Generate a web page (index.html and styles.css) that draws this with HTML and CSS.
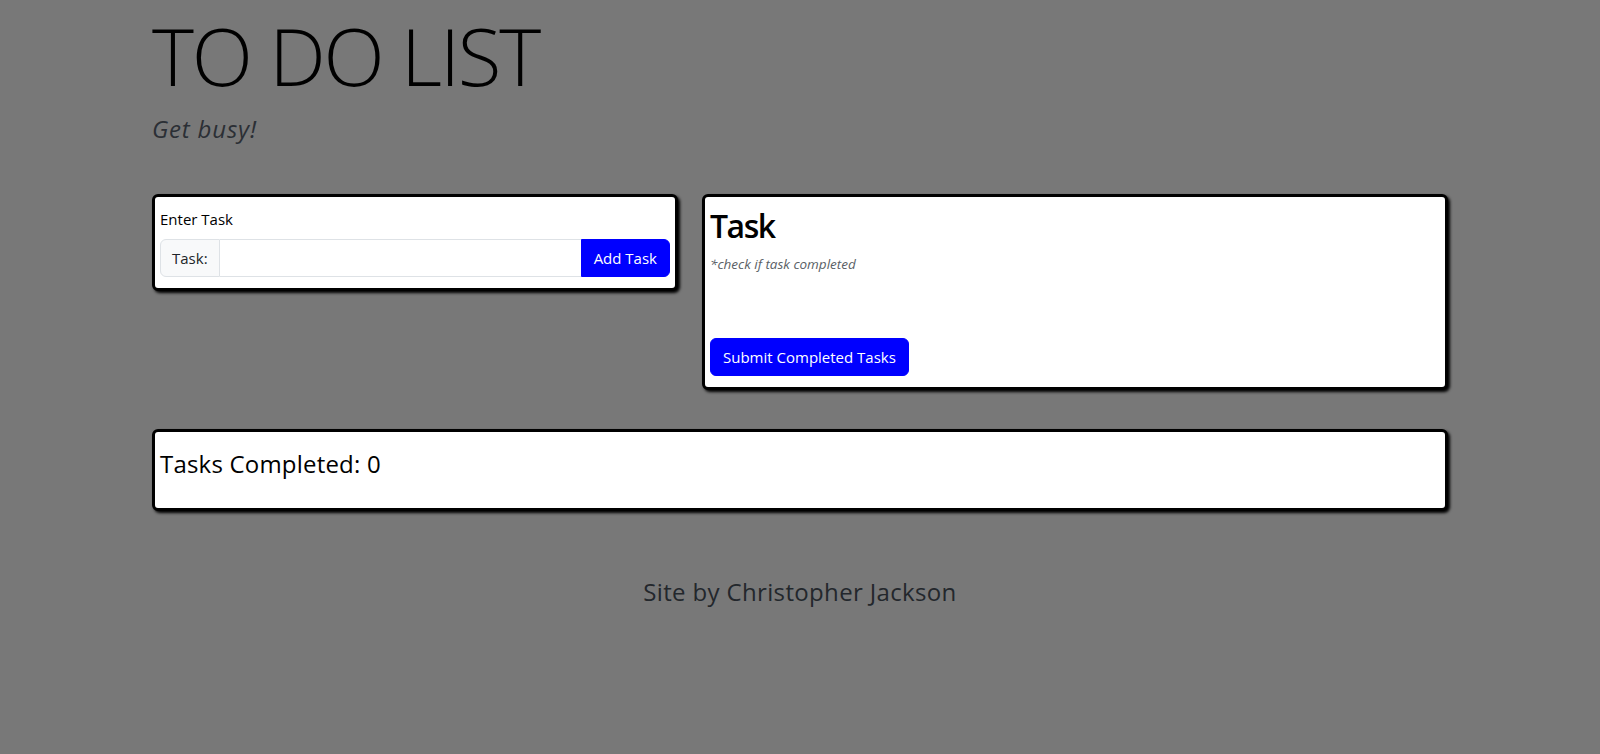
FILE: index.html
```html
<!DOCTYPE html>
<html lang="en">
<head>
<meta charset="utf-8">
<title>To Do List</title>
<link rel="stylesheet" href="styles.css">
</head>
<body>
<div class="container">
  <header class="hero">
    <h1 class="title">TO DO LIST</h1>
    <p class="lead">Get busy!</p>
  </header>
  <div class="row">
    <div class="col-left">
      <div class="box entry-box">
        <label class="form-label" for="task">Enter Task</label>
        <div class="input-group">
          <span class="addon">Task:</span>
          <input id="task" class="field" type="text">
          <button class="btn btn-add" type="button">Add Task</button>
        </div>
      </div>
    </div>
    <div class="col-right">
      <div class="box task-box">
        <h2 class="task-title">Task</h2>
        <p class="note">*check if task completed</p>
        <div class="task-list"></div>
        <button class="btn btn-submit" type="button">Submit Completed Tasks</button>
      </div>
    </div>
  </div>
  <div class="box done-box">
    <h4 class="done-title">Tasks Completed: 0</h4>
  </div>
  <footer class="footer">Site by Christopher Jackson</footer>
</div>
</body>
</html>
```
FILE: styles.css
```css
* { box-sizing: border-box; }

html, body {
  margin: 0;
  padding: 0;
}

body {
  background: #787878;
  color: #212529;
  font-family: "Open Sans", "Noto Sans", "Liberation Sans", sans-serif;
  font-size: 16px;
  line-height: 1.5;
  min-height: 754px;
}

.container {
  width: 1320px;
  margin: 0 auto;
  padding: 0 12px;
}

.hero {
  padding-top: 7px;
}

.title {
  margin: 0 0 8px;
  font-size: 80px;
  font-weight: 300;
  line-height: 1.2;
  letter-spacing: -2.2px;
  color: #000;
}

.lead {
  margin: 0;
  font-size: 24px;
  font-style: italic;
  line-height: 36px;
  letter-spacing: 0.8px;
  color: #2b2f35;
}

.row {
  display: flex;
  align-items: flex-start;
  gap: 24px;
  margin-top: 47px;
  margin-bottom: 39px;
}

.col-left {
  flex: 0 0 526px;
}

.col-right {
  flex: 1 1 auto;
}

.box {
  background: #fff;
  border: 3px solid #000;
  border-radius: 6px;
  box-shadow: 2px 2px 3px #000;
}

.entry-box {
  padding: 10px 5px 11px;
}

.form-label {
  display: block;
  margin-bottom: 8px;
  font-size: 15px;
  line-height: 24px;
  color: #000;
}

.input-group {
  display: flex;
  height: 38px;
}

.addon {
  display: flex;
  align-items: center;
  padding: 0 11px;
  background: #f8f9fa;
  border: 1px solid #dee2e6;
  border-radius: 6px 0 0 6px;
  font-size: 15px;
  color: #212529;
}

.field {
  flex: 1 1 auto;
  min-width: 0;
  border: 1px solid #dee2e6;
  border-left: none;
  border-right: none;
  background: #fff;
  font: inherit;
  padding: 0 12px;
  outline: none;
}

.btn {
  font-family: inherit;
  font-size: 15px;
  line-height: 24px;
  color: #fff;
  background: #0000ff;
  border: 1px solid #0000ff;
  padding: 6px 12px;
  cursor: pointer;
}

.btn-add {
  border-radius: 0 6px 6px 0;
  height: 38px;
}

.task-box {
  padding: 10px 5px 11px;
}

.task-title {
  margin: 0 0 9px;
  font-size: 32px;
  font-weight: 600;
  line-height: 1.2;
  color: #000;
  letter-spacing: -1.5px;
}

.note {
  margin: 0;
  font-size: 13.5px;
  font-style: italic;
  line-height: 21px;
  color: #5a5f66;
}

.task-list {
  height: 63px;
}

.btn-submit {
  border-radius: 6px;
  height: 38px;
  display: block;
}

.done-box {
  padding: 10px 5px;
}

.done-title {
  margin: 8px 0 19px;
  font-size: 24px;
  font-weight: 400;
  line-height: 1.2;
  letter-spacing: 0.2px;
  color: #000;
}

.footer {
  margin-top: 63px;
  text-align: center;
  font-size: 24px;
  line-height: 36px;
  letter-spacing: 0.35px;
  color: #23272c;
}
```
